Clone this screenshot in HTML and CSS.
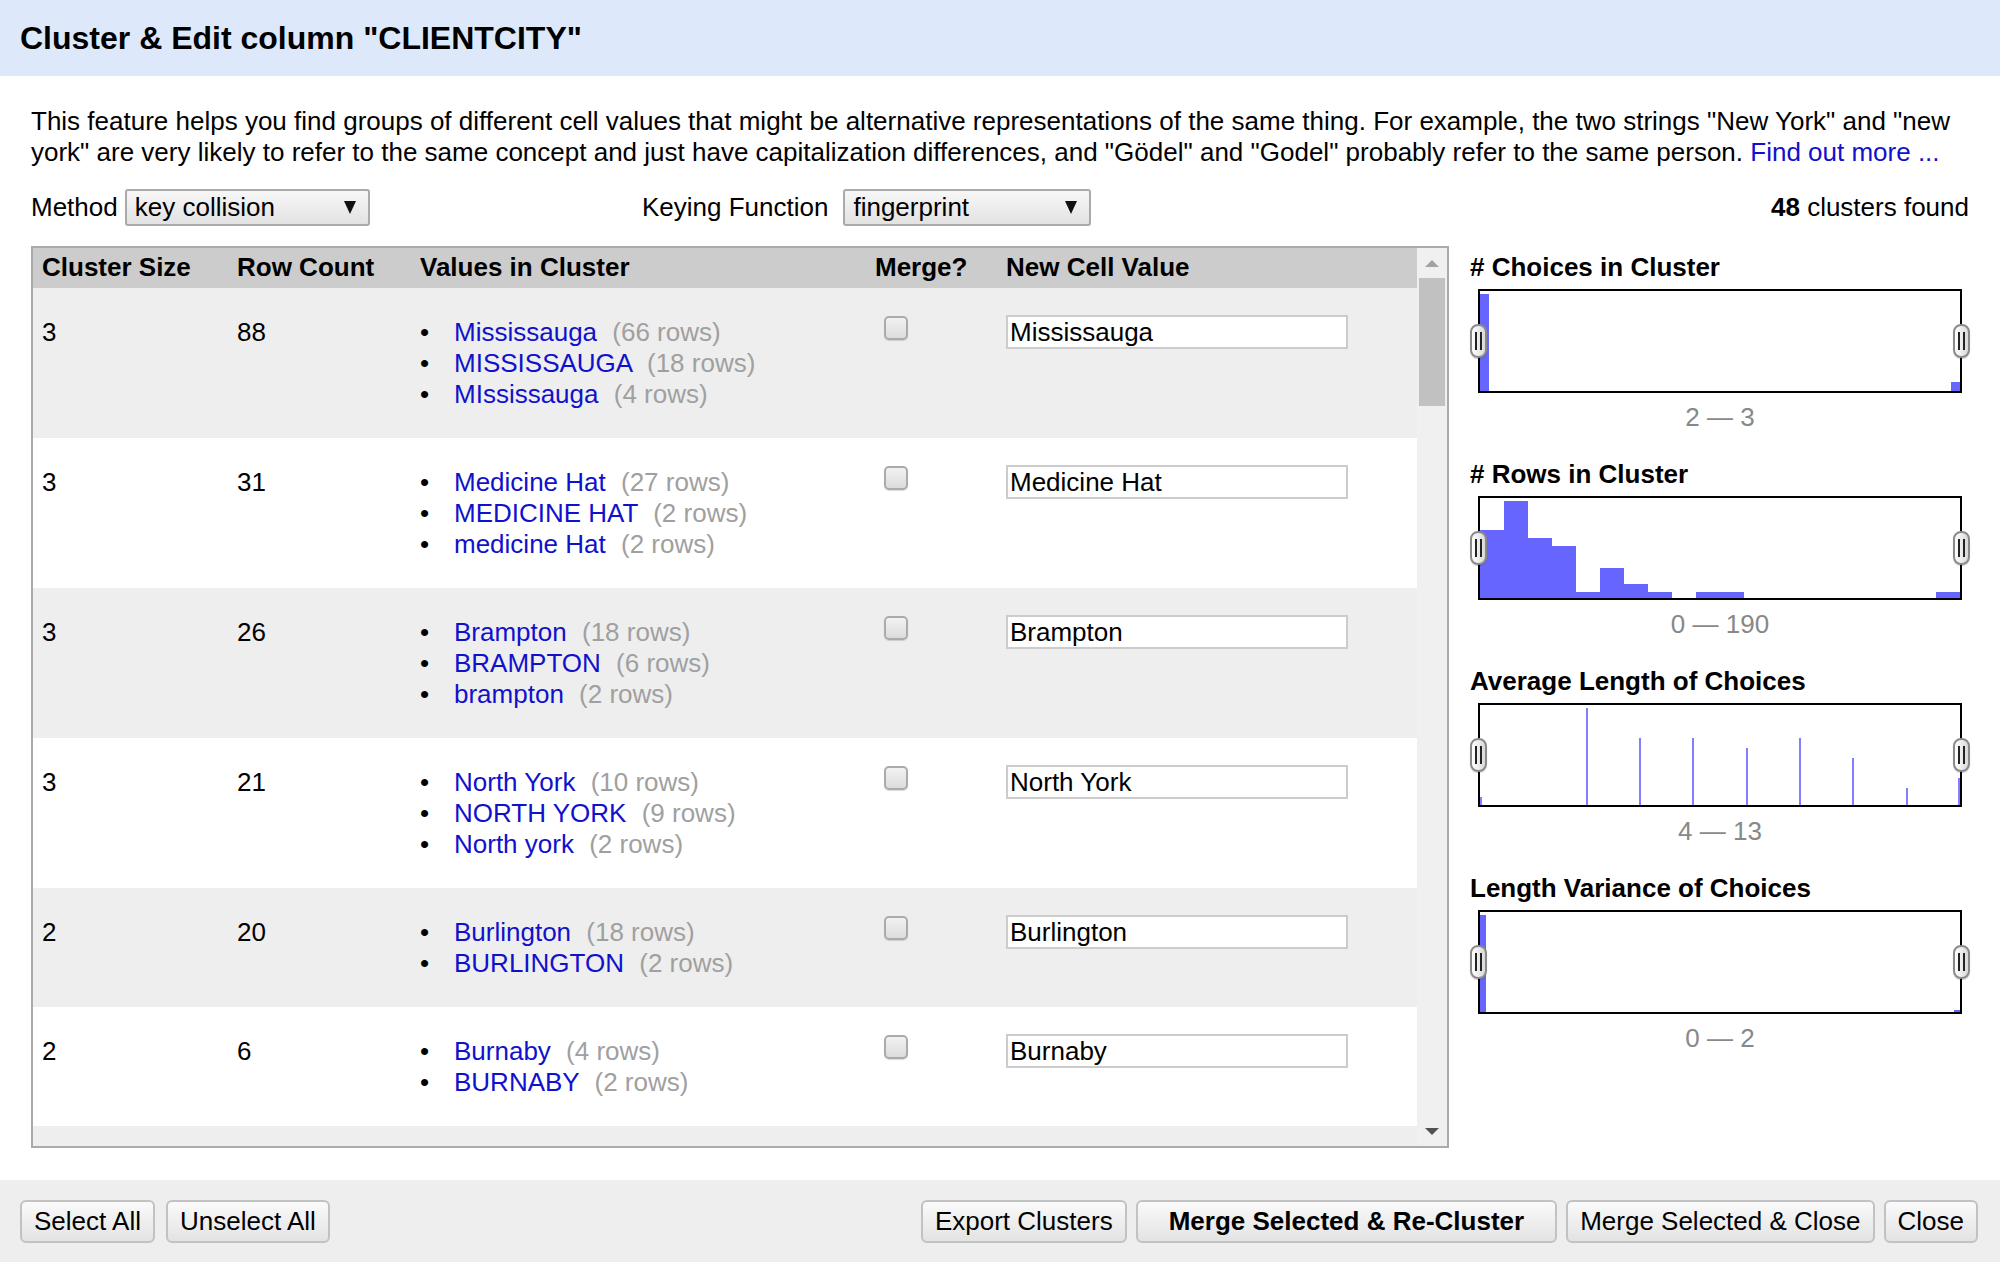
FILE: index.html
```html
<!DOCTYPE html>
<html lang="en">
<head>
<meta charset="utf-8">
<title>Cluster &amp; Edit column</title>
<link rel="stylesheet" href="styles.css">
</head>
<body>
<div class="dialog">
  <header class="dlg-header">
    <h1>Cluster &amp; Edit column "CLIENTCITY"</h1>
  </header>

  <main class="dlg-body">
    <p class="intro">This feature helps you find groups of different cell values that might be alternative representations of the same thing. For example, the two strings "New York" and "new york" are very likely to refer to the same concept and just have capitalization differences, and "Gödel" and "Godel" probably refer to the same person. <a href="#">Find out more ...</a></p>

    <div class="controls">
      <div class="ctl">
        <span>Method</span>
        <div class="select sel-method"><span>key collision</span><span class="caret"></span></div>
      </div>
      <div class="ctl">
        <span>Keying Function</span>
        <div class="select sel-key"><span>fingerprint</span><span class="caret"></span></div>
      </div>
      <div class="found"><b>48</b> clusters found</div>
    </div>

    <div class="content">
      <div class="table-box">
        <div class="table-scroll">
          <div class="trow thead">
            <div>Cluster Size</div><div>Row Count</div><div>Values in Cluster</div><div>Merge?</div><div>New Cell Value</div>
          </div>

          <div class="trow odd">
            <div>3</div><div>88</div>
            <div><ul class="vals">
              <li><a href="#">Mississauga</a> <span class="cnt">(66 rows)</span></li>
              <li><a href="#">MISSISSAUGA</a> <span class="cnt">(18 rows)</span></li>
              <li><a href="#">MIssissauga</a> <span class="cnt">(4 rows)</span></li>
            </ul></div>
            <div><input type="checkbox" class="chk"></div>
            <div><input type="text" class="newval" value="Mississauga"></div>
          </div>

          <div class="trow">
            <div>3</div><div>31</div>
            <div><ul class="vals">
              <li><a href="#">Medicine Hat</a> <span class="cnt">(27 rows)</span></li>
              <li><a href="#">MEDICINE HAT</a> <span class="cnt">(2 rows)</span></li>
              <li><a href="#">medicine Hat</a> <span class="cnt">(2 rows)</span></li>
            </ul></div>
            <div><input type="checkbox" class="chk"></div>
            <div><input type="text" class="newval" value="Medicine Hat"></div>
          </div>

          <div class="trow odd">
            <div>3</div><div>26</div>
            <div><ul class="vals">
              <li><a href="#">Brampton</a> <span class="cnt">(18 rows)</span></li>
              <li><a href="#">BRAMPTON</a> <span class="cnt">(6 rows)</span></li>
              <li><a href="#">brampton</a> <span class="cnt">(2 rows)</span></li>
            </ul></div>
            <div><input type="checkbox" class="chk"></div>
            <div><input type="text" class="newval" value="Brampton"></div>
          </div>

          <div class="trow">
            <div>3</div><div>21</div>
            <div><ul class="vals">
              <li><a href="#">North York</a> <span class="cnt">(10 rows)</span></li>
              <li><a href="#">NORTH YORK</a> <span class="cnt">(9 rows)</span></li>
              <li><a href="#">North york</a> <span class="cnt">(2 rows)</span></li>
            </ul></div>
            <div><input type="checkbox" class="chk"></div>
            <div><input type="text" class="newval" value="North York"></div>
          </div>

          <div class="trow odd">
            <div>2</div><div>20</div>
            <div><ul class="vals">
              <li><a href="#">Burlington</a> <span class="cnt">(18 rows)</span></li>
              <li><a href="#">BURLINGTON</a> <span class="cnt">(2 rows)</span></li>
            </ul></div>
            <div><input type="checkbox" class="chk"></div>
            <div><input type="text" class="newval" value="Burlington"></div>
          </div>

          <div class="trow">
            <div>2</div><div>6</div>
            <div><ul class="vals">
              <li><a href="#">Burnaby</a> <span class="cnt">(4 rows)</span></li>
              <li><a href="#">BURNABY</a> <span class="cnt">(2 rows)</span></li>
            </ul></div>
            <div><input type="checkbox" class="chk"></div>
            <div><input type="text" class="newval" value="Burnaby"></div>
          </div>

          <div class="trow odd stub"></div>
        </div>

        <div class="scrollbar">
          <div class="sb-btn"><span class="tri-up"></span></div>
          <div class="sb-thumb"></div>
          <div class="sb-rest"></div>
          <div class="sb-btn"><span class="tri-down"></span></div>
        </div>
      </div>

      <aside class="facets">
        <section class="facet">
          <h3># Choices in Cluster</h3>
          <div class="chart">
            <svg viewBox="0 0 480 100" preserveAspectRatio="none">
              <rect class="bar" x="0" y="3" width="9" height="97"/>
              <rect class="bar" x="471" y="91" width="9" height="9"/>
            </svg>
            <span class="handle h-left"></span><span class="handle h-right"></span>
          </div>
          <div class="range">2 — 3</div>
        </section>

        <section class="facet">
          <h3># Rows in Cluster</h3>
          <div class="chart">
            <svg viewBox="0 0 480 100" preserveAspectRatio="none">
              <rect class="bar" x="0" y="32" width="24" height="68"/>
              <rect class="bar" x="24" y="3" width="24" height="97"/>
              <rect class="bar" x="48" y="40" width="24" height="60"/>
              <rect class="bar" x="72" y="48" width="24" height="52"/>
              <rect class="bar" x="96" y="94" width="24" height="6"/>
              <rect class="bar" x="120" y="70" width="24" height="30"/>
              <rect class="bar" x="144" y="86" width="24" height="14"/>
              <rect class="bar" x="168" y="94" width="24" height="6"/>
              <rect class="bar" x="216" y="94" width="48" height="6"/>
              <rect class="bar" x="456" y="94" width="24" height="6"/>
            </svg>
            <span class="handle h-left"></span><span class="handle h-right"></span>
          </div>
          <div class="range">0 — 190</div>
        </section>

        <section class="facet">
          <h3>Average Length of Choices</h3>
          <div class="chart">
            <svg viewBox="0 0 480 100" preserveAspectRatio="none">
              <rect class="line" x="0" y="92" width="2" height="8"/>
              <rect class="line" x="106" y="3" width="2" height="97"/>
              <rect class="line" x="159" y="33" width="2" height="67"/>
              <rect class="line" x="212" y="33" width="2" height="67"/>
              <rect class="line" x="266" y="43" width="2" height="57"/>
              <rect class="line" x="319" y="33" width="2" height="67"/>
              <rect class="line" x="372" y="53" width="2" height="47"/>
              <rect class="line" x="426" y="83" width="2" height="17"/>
              <rect class="line" x="478" y="73" width="2" height="27"/>
            </svg>
            <span class="handle h-left"></span><span class="handle h-right"></span>
          </div>
          <div class="range">4 — 13</div>
        </section>

        <section class="facet">
          <h3>Length Variance of Choices</h3>
          <div class="chart">
            <svg viewBox="0 0 480 100" preserveAspectRatio="none">
              <rect class="bar" x="0" y="3" width="6" height="97"/>
              <rect class="bar" x="474" y="98" width="6" height="2"/>
            </svg>
            <span class="handle h-left"></span><span class="handle h-right"></span>
          </div>
          <div class="range">0 — 2</div>
        </section>
      </aside>
    </div>
  </main>

  <footer class="dlg-footer">
    <div class="btn-group">
      <button class="btn">Select All</button>
      <button class="btn">Unselect All</button>
    </div>
    <div class="btn-group right">
      <button class="btn">Export Clusters</button>
      <button class="btn primary">Merge Selected &amp; Re-Cluster</button>
      <button class="btn">Merge Selected &amp; Close</button>
      <button class="btn">Close</button>
    </div>
  </footer>
</div>
</body>
</html>
```

FILE: styles.css
```css
html, body {
  margin: 0;
  padding: 0;
  background: #fff;
}
body {
  font-family: "Liberation Sans", Arial, Helvetica, sans-serif;
  font-size: 26px;
  color: #000;
}
.dialog {
  width: 2000px;
  height: 1262px;
  display: flex;
  flex-direction: column;
}
.dlg-header {
  height: 76px;
  background: #dde9fb;
  display: flex;
  align-items: center;
  padding-left: 20px;
  box-sizing: border-box;
}
.dlg-header h1 {
  margin: 0;
  font-size: 32px;
  font-weight: bold;
  line-height: 36px;
}
.dlg-body {
  flex: 1;
  padding: 30px 31px 0 31px;
}
.intro {
  margin: 0;
  line-height: 31px;
}
.intro a, .vals a {
  color: #11c;
  text-decoration: none;
}
.controls {
  margin-top: 21px;
  display: grid;
  grid-template-columns: 611px 1fr auto;
  align-items: center;
  height: 37px;
}
.ctl {
  display: flex;
  align-items: center;
}
.select {
  height: 37px;
  box-sizing: border-box;
  border: 2px solid #aaa;
  border-radius: 3px;
  background: linear-gradient(#f7f7f7, #e2e2e2);
  display: flex;
  align-items: center;
  justify-content: space-between;
  padding: 0 12px 0 8px;
}
.sel-method { width: 245px; margin-left: 7px; }
.sel-key { width: 248px; margin-left: 15px; }
.caret {
  width: 0;
  height: 0;
  border-left: 6px solid transparent;
  border-right: 6px solid transparent;
  border-top: 13px solid #111;
}
.found {
  text-align: right;
}
.content {
  margin-top: 20px;
  display: flex;
  gap: 21px;
}
.table-box {
  width: 1418px;
  height: 902px;
  box-sizing: border-box;
  border: 2px solid #aaa;
  display: flex;
}
.table-scroll {
  flex: 1;
  overflow: hidden;
}
.trow {
  display: grid;
  grid-template-columns: 195px 183px 455px 131px 1fr;
  background: #fff;
}
.trow.odd { background: #eee; }
.trow.stub { height: 40px; }
.trow > div {
  padding: 29px 9px 28px 9px;
  line-height: 31px;
}
.thead { background: #ccc; }
.thead > div {
  padding: 4px 9px 5px 9px;
  font-weight: bold;
}
.vals {
  list-style: none;
  margin: 0;
  padding: 0;
}
.vals li::before {
  content: "\2022";
  display: inline-block;
  width: 34px;
}
.cnt {
  color: #a0a0a0;
  margin-left: 8px;
}
.chk {
  appearance: none;
  -webkit-appearance: none;
  display: block;
  margin: -1px 0 0 9px;
  width: 24px;
  height: 24px;
  box-sizing: border-box;
  border: 2px solid #ababab;
  border-radius: 5px;
  background: linear-gradient(#f2f2f2, #dcdcdc);
  box-shadow: 0 1px 1px rgba(0,0,0,0.15);
}
.newval {
  display: block;
  margin-top: -2px;
  width: 342px;
  height: 34px;
  box-sizing: border-box;
  border: 2px solid #ccc;
  padding: 0 2px;
  font-family: inherit;
  font-size: 26px;
  color: #000;
  background: #fff;
  outline: none;
}
.scrollbar {
  width: 30px;
  background: #f0f0f0;
  display: flex;
  flex-direction: column;
}
.sb-btn {
  height: 30px;
  display: flex;
  align-items: center;
  justify-content: center;
}
.tri-up {
  width: 0; height: 0;
  border-left: 7px solid transparent;
  border-right: 7px solid transparent;
  border-bottom: 7px solid #a3a3a3;
}
.tri-down {
  width: 0; height: 0;
  border-left: 7px solid transparent;
  border-right: 7px solid transparent;
  border-top: 7px solid #505050;
}
.sb-thumb {
  height: 128px;
  margin: 0 2px;
  background: #c1c1c1;
}
.sb-rest { flex: 1; }

.facets {
  width: 499px;
  padding-top: 6px;
}
.facet { margin-bottom: 27px; }
.facet h3 {
  margin: 0;
  font-size: 26px;
  line-height: 30px;
  font-weight: bold;
}
.chart {
  position: relative;
  margin: 7px 0 0 8px;
  width: 484px;
  height: 104px;
  box-sizing: border-box;
  border: 2px solid #000;
  background: #fff;
}
.chart svg {
  display: block;
  width: 480px;
  height: 100px;
}
.bar { fill: #6666ff; }
.line { fill: #8080ff; }
.handle {
  position: absolute;
  top: 50%;
  margin-top: -17px;
  width: 17px;
  height: 34px;
  box-sizing: border-box;
  border: 2px solid #8a8a8a;
  border-radius: 8px;
  background: linear-gradient(to right, #ffffff, #d8d8d8);
  box-shadow: 0 1px 1px rgba(0,0,0,0.2);
}
.handle::before {
  content: "";
  position: absolute;
  left: 3px;
  top: 6px;
  width: 3px;
  height: 18px;
  border-left: 2px solid #222;
  border-right: 2px solid #222;
}
.h-left { left: -10px; }
.h-right { right: -10px; }
.range {
  margin: 9px 0 0 8px;
  width: 484px;
  text-align: center;
  line-height: 30px;
  color: #888;
}

.dlg-footer {
  height: 82px;
  box-sizing: border-box;
  background: #eee;
  padding: 20px 22px 0 20px;
  display: flex;
  justify-content: space-between;
}
.btn-group {
  display: flex;
  gap: 11px;
}
.btn-group.right { gap: 9px; }
.btn {
  height: 43px;
  box-sizing: border-box;
  padding: 0 12px;
  border: 2px solid #c2c2c2;
  border-radius: 6px;
  background: linear-gradient(#fafafa, #e3e3e3);
  font-family: inherit;
  font-size: 26px;
  color: #000;
}
.btn.primary {
  font-weight: bold;
  padding: 0 31px;
}
```
